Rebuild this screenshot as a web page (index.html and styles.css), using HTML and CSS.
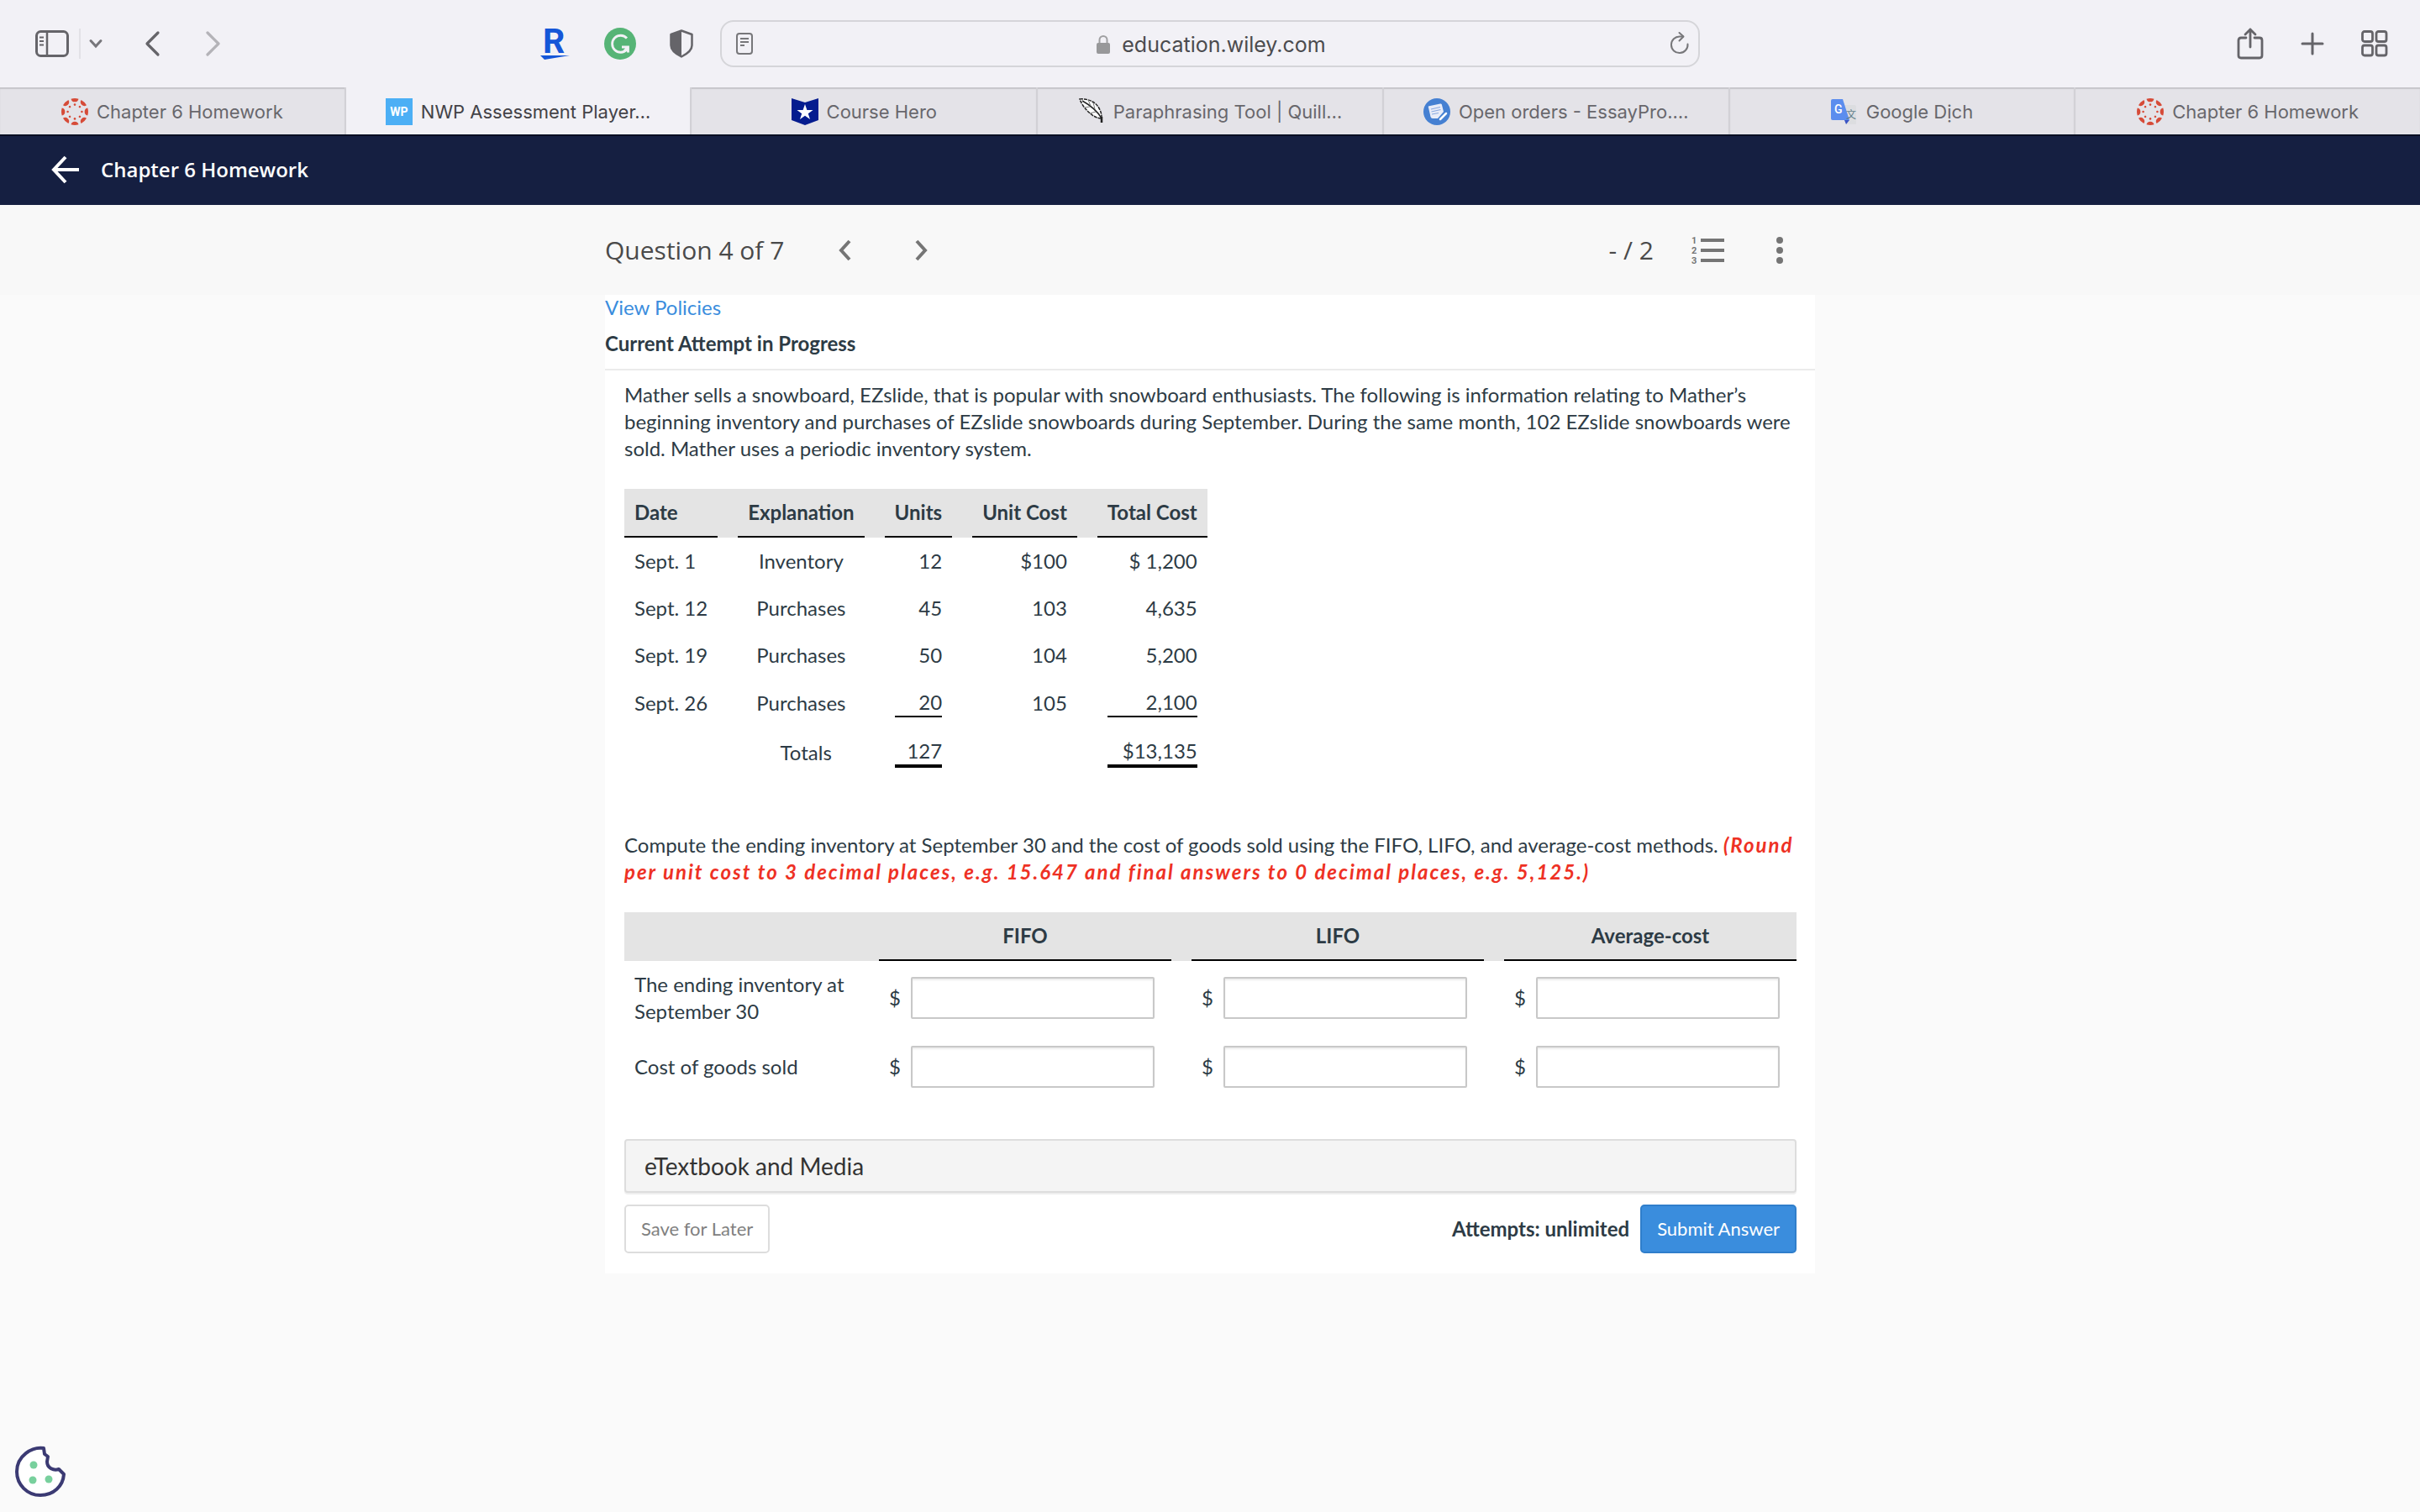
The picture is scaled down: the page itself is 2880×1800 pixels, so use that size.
FILE: index.html
```html
<!DOCTYPE html>
<html lang="en">
<head>
    <meta charset="UTF-8">
    <title>NWP Assessment Player</title>
    <link rel="stylesheet" href="styles.css">
</head>
<body>
<svg class="defs" width="0" height="0">
    <defs>
        <symbol id="canvas-logo" viewBox="0 0 32 32">
            <g fill="#d64b38">
                <g id="canvas-arm">
                    <path d="M11.5 0.7 A16 16 0 0 1 20.5 0.7 A4.6 4.6 0 0 1 11.5 0.7Z"/>
                    <circle cx="16" cy="7.6" r="1.3"/>
                </g>
                <use href="#canvas-arm" transform="rotate(45 16 16)"/>
                <use href="#canvas-arm" transform="rotate(90 16 16)"/>
                <use href="#canvas-arm" transform="rotate(135 16 16)"/>
                <use href="#canvas-arm" transform="rotate(180 16 16)"/>
                <use href="#canvas-arm" transform="rotate(225 16 16)"/>
                <use href="#canvas-arm" transform="rotate(270 16 16)"/>
                <use href="#canvas-arm" transform="rotate(315 16 16)"/>
            </g>
        </symbol>
    </defs>
</svg>

<div class="toolbar">
    <div class="toolbar-side">
        <button class="icon-btn" aria-label="Show sidebar">
            <svg width="40" height="32" viewBox="0 0 40 32" fill="none" stroke="#656469" stroke-width="3">
                <rect x="1.5" y="1.5" width="37" height="29" rx="5"/>
                <path d="M14 1.5V30.5" stroke-width="2.5"/>
                <path d="M5 8.5H10M5 13H10M5 17.5H10" stroke-width="2"/>
            </svg>
        </button>
        <span class="toolbar-line"></span>
        <button class="icon-btn" aria-label="Tab groups">
            <svg width="16" height="12" viewBox="0 0 16 12" fill="none" stroke="#77767b" stroke-width="3" stroke-linecap="round">
                <path d="M2 2.5L8 9L14 2.5"/>
            </svg>
        </button>
        <button class="icon-btn back" aria-label="Back">
            <svg width="18" height="30" viewBox="0 0 18 30" fill="none" stroke="#656469" stroke-width="3.2" stroke-linecap="round" stroke-linejoin="round">
                <path d="M16 2L3 15L16 28"/>
            </svg>
        </button>
        <button class="icon-btn forward" aria-label="Forward">
            <svg width="18" height="30" viewBox="0 0 18 30" fill="none" stroke="#b4b3b8" stroke-width="3.2" stroke-linecap="round" stroke-linejoin="round">
                <path d="M2 2L15 15L2 28"/>
            </svg>
        </button>
        <div class="extensions">
            <button class="icon-btn" aria-label="Rakuten">
                <svg width="36" height="40" viewBox="0 0 36 40" fill="#1556d8">
                    <text x="3" y="31" font-family="Roboto, sans-serif" font-weight="700" font-size="41">R</text>
                    <path d="M0 34H35L5 39Z"/>
                </svg>
            </button>
            <button class="icon-btn" aria-label="Grammarly">
                <svg width="38" height="38" viewBox="0 0 38 38" fill="none">
                    <circle cx="19" cy="19" r="19" fill="#56b476"/>
                    <path d="M27 12.5A10 10 0 1 0 27 26M21 23H28.5V29.5M28 23.5L23.500 28" stroke="#f2f1f6" stroke-width="2.8"/>
                </svg>
            </button>
            <button class="icon-btn" aria-label="Privacy report">
                <svg width="28" height="34" viewBox="0 0 28 34">
                    <path d="M14 1.5L26.5 6V19C26.5 25 20 29.5 14 32.5C8 29.5 1.5 25 1.5 19V6Z" fill="none" stroke="#656469" stroke-width="2.5" stroke-linejoin="round"/>
                    <path d="M14 1.5V32.5C8 29.5 1.5 25 1.5 19V6Z" fill="#656469"/>
                </svg>
            </button>
        </div>
    </div>
    <div class="address">
        <button class="icon-btn" aria-label="Reader">
            <svg width="20" height="26" viewBox="0 0 20 26" fill="none" stroke="#77777a" stroke-width="2">
                <rect x="1" y="1" width="18" height="24" rx="3"/>
                <path d="M5 7H15M5 11H15M5 15H10"/>
            </svg>
        </button>
        <div class="address-url">
            <svg width="16" height="24" viewBox="0 0 16 24">
                <path d="M3.5 11V6.5a4.5 4.5 0 0 1 9 0V11" fill="none" stroke="#a0a0a2" stroke-width="2"/>
                <rect y="10" width="16" height="13" rx="2" fill="#98989a"/>
            </svg>
            <span>education.wiley.com</span>
        </div>
        <button class="icon-btn" aria-label="Reload">
            <svg width="24" height="28" viewBox="0 0 24 28" fill="none" stroke="#77777a" stroke-width="2" stroke-linecap="round">
                <path d="M21.5 14.5A9.8 9.8 0 1 1 12 5.5H16"/>
                <path d="M11.5 1L16.5 5.5L11.5 10.5" stroke-linejoin="round"/>
            </svg>
        </button>
    </div>
    <div class="toolbar-side toolbar-end">
        <button class="icon-btn" aria-label="Share">
            <svg width="32" height="38" viewBox="0 0 32 38" fill="none" stroke="#656469" stroke-width="2.8" stroke-linecap="round" stroke-linejoin="round">
                <path d="M11 12H5Q2 12 2 15V33Q2 36 5 36H27Q30 36 30 33V15Q30 12 27 12H21"/>
                <path d="M16 23V2M10 8L16 2L22 8"/>
            </svg>
        </button>
        <button class="icon-btn" aria-label="New tab">
            <svg width="28" height="28" viewBox="0 0 28 28" stroke="#656469" stroke-width="3" stroke-linecap="round">
                <path d="M14 2V26M2 14H26"/>
            </svg>
        </button>
        <button class="icon-btn" aria-label="Tab overview">
            <svg width="32" height="32" viewBox="0 0 32 32" fill="none" stroke="#656469" stroke-width="2.8">
                <rect x="1.5" y="1.5" width="12" height="12" rx="2.5"/>
                <rect x="18" y="1.5" width="12" height="12" rx="2.5"/>
                <rect x="1.5" y="18" width="12" height="12" rx="2.5"/>
                <rect x="18" y="18" width="12" height="12" rx="2.5"/>
            </svg>
        </button>
    </div>
</div>

<nav class="tabs">
    <a class="tab" href="#">
        <svg width="32" height="32"><use href="#canvas-logo"/></svg>
        <span>Chapter 6 Homework</span>
    </a>
    <a class="tab tab-active" href="#">
        <span class="wp-logo">WP</span>
        <span>NWP Assessment Player…</span>
    </a>
    <a class="tab" href="#">
        <svg width="32" height="32" viewBox="0 0 32 32">
            <path d="M0 0L16 5L32 0V26L16 32L0 26Z" fill="#051c8f"/>
            <path d="M16 7L18.4 14H25.5L19.8 18.2L22 25L16 20.8L10 25L12.2 18.2L6.5 14H13.6Z" fill="#fff"/>
        </svg>
        <span>Course Hero</span>
    </a>
    <a class="tab" href="#">
        <svg width="32" height="32" viewBox="0 0 32 32" fill="none" stroke="#222" stroke-width="1.5">
            <path d="M2 1C11 0 22 4 26 14C28 18 28 21 28 24C18 24 6 12 2 1Z" fill="#fff" stroke-dasharray="4 1"/>
            <path d="M5 3C14 8 23 15 28 24V29"/>
            <path d="M28 22V29" stroke-width="2.5"/>
            <path d="M12 2L15 9M18 5L20 13M8 11L14 10M14 18L21 16" stroke="#777" stroke-width="1"/>
        </svg>
        <span>Paraphrasing Tool | Quill…</span>
    </a>
    <a class="tab" href="#">
        <svg width="32" height="32" viewBox="0 0 32 32">
            <circle cx="16" cy="16" r="16" fill="#4580d2"/>
            <path d="M6 11Q5 9 8 9L20 6.5Q22 6 22 8L24 16L17 24L11 24Q9 24 8.5 22Z" fill="#e8ecf8"/>
            <path d="M9 13L20 10.5M9.5 16L20.5 13.5M10 19L18 17.5" stroke="#8aa9e0" stroke-width="1.2"/>
            <path d="M20 25L27 18" stroke="#fff" stroke-width="2.5" stroke-linecap="round"/>
        </svg>
        <span>Open orders - EssayPro.…</span>
    </a>
    <a class="tab" href="#">
        <svg width="32" height="32" viewBox="0 0 32 32">
            <path d="M12 8H28Q30 8 30 10V31H18Z" fill="#dcdde0"/>
            <path d="M16 26H22L18 31Z" fill="#3a54c4"/>
            <path d="M2 1H14L22 26H2Q0 26 0 24V3Q0 1 2 1Z" fill="#5b8dee"/>
            <text x="4" y="18" font-family="Roboto, sans-serif" font-weight="500" font-size="14" fill="#fff">G</text>
            <text x="18" y="24" font-family="Noto Sans CJK SC, sans-serif" font-size="12" fill="#607d8b">文</text>
        </svg>
        <span>Google Dịch</span>
    </a>
    <a class="tab" href="#">
        <svg width="32" height="32"><use href="#canvas-logo"/></svg>
        <span>Chapter 6 Homework</span>
    </a>
</nav>

<header class="course-bar">
    <button class="icon-btn" aria-label="Back to course">
        <svg width="34" height="34" viewBox="0 0 34 34" fill="none" stroke="#fff" stroke-width="4">
            <path d="M17 2L3 17L17 32M3 17H33"/>
        </svg>
    </button>
    <h1>Chapter 6 Homework</h1>
</header>

<div class="question-bar">
    <div class="question-bar-inner">
        <h2>Question 4 of 7</h2>
        <button class="icon-btn" aria-label="Previous question">
            <svg width="16" height="26" viewBox="0 0 16 26" fill="none" stroke="#757575" stroke-width="4">
                <path d="M14 2L4 13L14 24"/>
            </svg>
        </button>
        <button class="icon-btn next" aria-label="Next question">
            <svg width="16" height="26" viewBox="0 0 16 26" fill="none" stroke="#757575" stroke-width="4">
                <path d="M2 2L12 13L2 24"/>
            </svg>
        </button>
        <span class="score">- / 2</span>
        <button class="icon-btn" aria-label="Question list">
            <svg width="40" height="34" viewBox="0 0 40 34" fill="#757575">
                <path d="M11 3H39V7H11ZM11 15H39V19H11ZM11 27H39V31H11Z"/>
                <g font-family="Roboto, sans-serif" font-weight="700" font-size="11">
                    <text x="0" y="9">1</text>
                    <text x="0" y="21">2</text>
                    <text x="0" y="33">3</text>
                </g>
            </svg>
        </button>
        <button class="icon-btn more" aria-label="More options">
            <svg width="8" height="34" viewBox="0 0 8 34" fill="#757575">
                <circle cx="4" cy="5" r="4"/>
                <circle cx="4" cy="17" r="4"/>
                <circle cx="4" cy="29" r="4"/>
            </svg>
        </button>
    </div>
</div>

<main class="card">
    <div class="card-head">
        <a class="policies" href="#">View Policies</a>
        <h3>Current Attempt in Progress</h3>
    </div>
    <div class="card-body">
        <p>Mather sells a snowboard, EZslide, that is popular with snowboard enthusiasts. The following is information relating to Mather’s beginning inventory and purchases of EZslide snowboards during September. During the same month, 102 EZslide snowboards were sold. Mather uses a periodic inventory system.</p>

        <table class="grid inventory">
            <thead>
            <tr>
                <th class="left"><div>Date</div></th>
                <th><div>Explanation</div></th>
                <th><div>Units</div></th>
                <th><div>Unit Cost</div></th>
                <th><div>Total Cost</div></th>
            </tr>
            </thead>
            <tbody>
            <tr>
                <td>Sept. 1</td>
                <td class="center">Inventory</td>
                <td class="num">12</td>
                <td class="num">$100</td>
                <td class="num">$ 1,200</td>
            </tr>
            <tr>
                <td>Sept. 12</td>
                <td class="center">Purchases</td>
                <td class="num">45</td>
                <td class="num">103</td>
                <td class="num">4,635</td>
            </tr>
            <tr>
                <td>Sept. 19</td>
                <td class="center">Purchases</td>
                <td class="num">50</td>
                <td class="num">104</td>
                <td class="num">5,200</td>
            </tr>
            <tr>
                <td>Sept. 26</td>
                <td class="center">Purchases</td>
                <td class="num"><div class="sum">20</div></td>
                <td class="num">105</td>
                <td class="num"><div class="sum">2,100</div></td>
            </tr>
            <tr>
                <td></td>
                <td class="center">&nbsp; Totals</td>
                <td class="num"><div class="total">127</div></td>
                <td></td>
                <td class="num"><div class="total">$13,135</div></td>
            </tr>
            </tbody>
        </table>

        <p>Compute the ending inventory at September 30 and the cost of goods sold using the FIFO, LIFO, and average-cost methods. <em>(Round per unit cost to 3 decimal places, e.g. 15.647 and final answers to 0 decimal places, e.g. 5,125.)</em></p>

        <table class="grid answers">
            <thead>
            <tr>
                <th class="label-col"></th>
                <th><div>FIFO</div></th>
                <th><div>LIFO</div></th>
                <th><div>Average-cost</div></th>
            </tr>
            </thead>
            <tbody>
            <tr>
                <td>The ending inventory at September 30</td>
                <td><label class="money">$<input type="text" aria-label="Ending inventory, FIFO"></label></td>
                <td><label class="money">$<input type="text" aria-label="Ending inventory, LIFO"></label></td>
                <td><label class="money">$<input type="text" aria-label="Ending inventory, average-cost"></label></td>
            </tr>
            <tr>
                <td>Cost of goods sold</td>
                <td><label class="money">$<input type="text" aria-label="Cost of goods sold, FIFO"></label></td>
                <td><label class="money">$<input type="text" aria-label="Cost of goods sold, LIFO"></label></td>
                <td><label class="money">$<input type="text" aria-label="Cost of goods sold, average-cost"></label></td>
            </tr>
            </tbody>
        </table>

        <button class="etextbook">eTextbook and Media</button>
        <div class="actions">
            <button class="btn">Save for Later</button>
            <span class="attempts">Attempts: unlimited</span>
            <button class="btn btn-primary">Submit Answer</button>
        </div>
    </div>
</main>

<button class="icon-btn cookie" aria-label="Cookie preferences">
    <svg width="60" height="60" viewBox="0 0 60 60">
        <path d="M34 2C20 0 2 11 2 30A28 28 0 0 0 30 58C46 58 57 47 58 33L52 27C46 29 38 26 38 18L39 12L35 9Z" fill="#fff" stroke="#3b3a73" stroke-width="4" stroke-linejoin="round"/>
        <g fill="#78d09d">
            <circle cx="22" cy="22" r="4.5"/>
            <circle cx="21" cy="40" r="4.5"/>
            <circle cx="40" cy="39" r="4.5"/>
        </g>
    </svg>
</button>
</body>
</html>
```
FILE: styles.css
```css
* {
    box-sizing: border-box;
}

body {
    margin: 0;
    min-height: 100vh;
    background: #fafafa;
    color: #2d3b45;
    font: 24px/32px Lato, "Liberation Sans", sans-serif;
}

h1, h2, h3, p {
    margin: 0;
}

svg {
    display: block;
    flex: none;
    overflow: visible;
}

.defs {
    position: absolute;
}

.icon-btn {
    padding: 0;
    border: 0;
    background: none;
    flex: none;
}

/* browser toolbar */
.toolbar {
    display: grid;
    grid-template-columns: 857fr 1166fr 857fr;
    align-items: center;
    height: 104px;
    background: #f2f1f6;
}

.toolbar-side {
    display: flex;
    align-items: center;
    padding-left: 42px;
}

.toolbar-line {
    width: 2px;
    height: 36px;
    margin: 0 10px 0 12px;
    background: #e2e1e6;
}

.back {
    margin-left: 50px;
}

.forward {
    margin-left: 55px;
}

.extensions {
    display: flex;
    align-items: center;
    gap: 40px;
    margin: 0 32px 0 auto;
}

.toolbar-end {
    justify-content: flex-end;
    gap: 44px;
    padding: 0 38px 0 0;
}

.address {
    display: flex;
    align-items: center;
    height: 56px;
    padding: 0 10px 0 17px;
    border: 2px solid #d5d5d9;
    border-radius: 16px;
}

.address-url {
    display: flex;
    flex: 1;
    align-items: center;
    justify-content: center;
    gap: 14px;
    padding-top: 2px;
    color: #4b4b4e;
    font-family: Inter, sans-serif;
    font-size: 25px;
}

.tabs {
    display: flex;
    height: 56px;
    background: #e4e3e8;
}

.tab {
    display: flex;
    flex: 1 1 0;
    align-items: center;
    justify-content: center;
    gap: 10px;
    padding-top: 2px;
    border-left: 2px solid #d2d1d6;
    box-shadow: inset 0 2px 1px #c6c5ca;
    color: #68676c;
    font-family: Inter, sans-serif;
    font-size: 22px;
    text-decoration: none;
    white-space: nowrap;
}

.tab:first-child {
    border-left: 0;
}

.tab-active {
    background: #f2f1f6;
    box-shadow: none;
    color: #434247;
}

.wp-logo {
    width: 32px;
    height: 32px;
    background: #4caff5;
    color: #fff;
    font: 700 14px/32px Roboto, sans-serif;
    text-align: center;
}

/* course header */
.course-bar {
    display: flex;
    align-items: center;
    gap: 25px;
    height: 84px;
    padding: 0 0 2px 61px;
    border-top: 2px solid #040e22;
    background: #151f41;
}

.course-bar h1 {
    color: #fff;
    font: 600 24px/32px "Open Sans", sans-serif;
}

.question-bar {
    background: #f8f8f8;
}

.question-bar-inner {
    display: flex;
    align-items: center;
    width: 50%;
    height: 107px;
    margin: 0 auto;
    padding-right: 38px;
}

.question-bar h2 {
    margin-right: 64px;
    color: #4a4a4a;
    font: 400 30px/40px "Open Sans", sans-serif;
}

.next {
    margin-left: 76px;
}

.score {
    margin: 0 45px 0 auto;
    color: #4a4a4a;
    font: 400 30px/40px "Open Sans", sans-serif;
}

.more {
    margin-left: 61px;
}

/* assessment card */
.card {
    width: 50%;
    margin: 0 auto;
    background: #fff;
}

.card-head {
    padding-bottom: 14px;
    border-bottom: 2px solid #ebebeb;
}

.policies {
    display: block;
    color: #3a8ddd;
    line-height: 30px;
    text-decoration: none;
}

.card-head h3 {
    padding-top: 12px;
    font-size: 24px;
}

.card-body {
    padding: 13px 22px 24px 23px;
}

.card-body em {
    color: #ee3124;
    font-weight: 700;
    letter-spacing: 2px;
}

.grid {
    border-collapse: collapse;
}

.grid thead {
    background: #e4e4e4;
}

.grid th {
    padding: 0 0 0 24px;
}

.grid th div {
    padding: 12px;
    border-bottom: 2px solid #000;
}

.grid th:first-child {
    padding-left: 0;
}

.grid td {
    padding: 12px 12px 12px 36px;
}

.grid td:first-child {
    padding-left: 12px;
}

.grid .left {
    text-align: left;
}

.grid .center {
    text-align: center;
}

.grid .num {
    text-align: right;
}

.inventory {
    margin: 32px 0 64px;
}

.sum {
    border-bottom: 2px solid #000;
}

.total {
    border-bottom: 4px solid #000;
}

.answers {
    width: 100%;
    margin: 32px 0 48px;
    table-layout: fixed;
}

.label-col {
    width: 20%;
}

.answers td {
    height: 76px;
}

.money {
    display: flex;
    align-items: center;
    gap: 12px;
}

.money input {
    flex: 1;
    min-width: 0;
    height: 50px;
    margin-right: 8px;
    padding: 8px;
    border: 2px solid #c8c8c8;
    border-radius: 2px;
    box-shadow: inset 0 2px 2px #ececec;
    font: inherit;
}

.etextbook {
    display: block;
    width: 100%;
    height: 64px;
    padding: 0 22px;
    border: 2px solid #ddd;
    border-radius: 4px;
    background: #f4f4f4;
    box-shadow: 0 2px 1px #eee;
    color: #333;
    font: 28px/40px Lato, sans-serif;
    text-align: left;
}

.actions {
    display: flex;
    align-items: center;
    margin-top: 14px;
}

.btn {
    height: 58px;
    padding: 0 18px;
    border: 2px solid #ddd;
    border-radius: 5px;
    background: #fff;
    color: #808080;
    font: 22px/32px Lato, sans-serif;
}

.btn-primary {
    border-color: #2f7ecb;
    background: #3a8ddd;
    color: #fff;
}

.attempts {
    margin: 0 13px 0 auto;
    font-weight: 700;
}

.cookie {
    position: fixed;
    bottom: 18px;
    left: 18px;
}
```
